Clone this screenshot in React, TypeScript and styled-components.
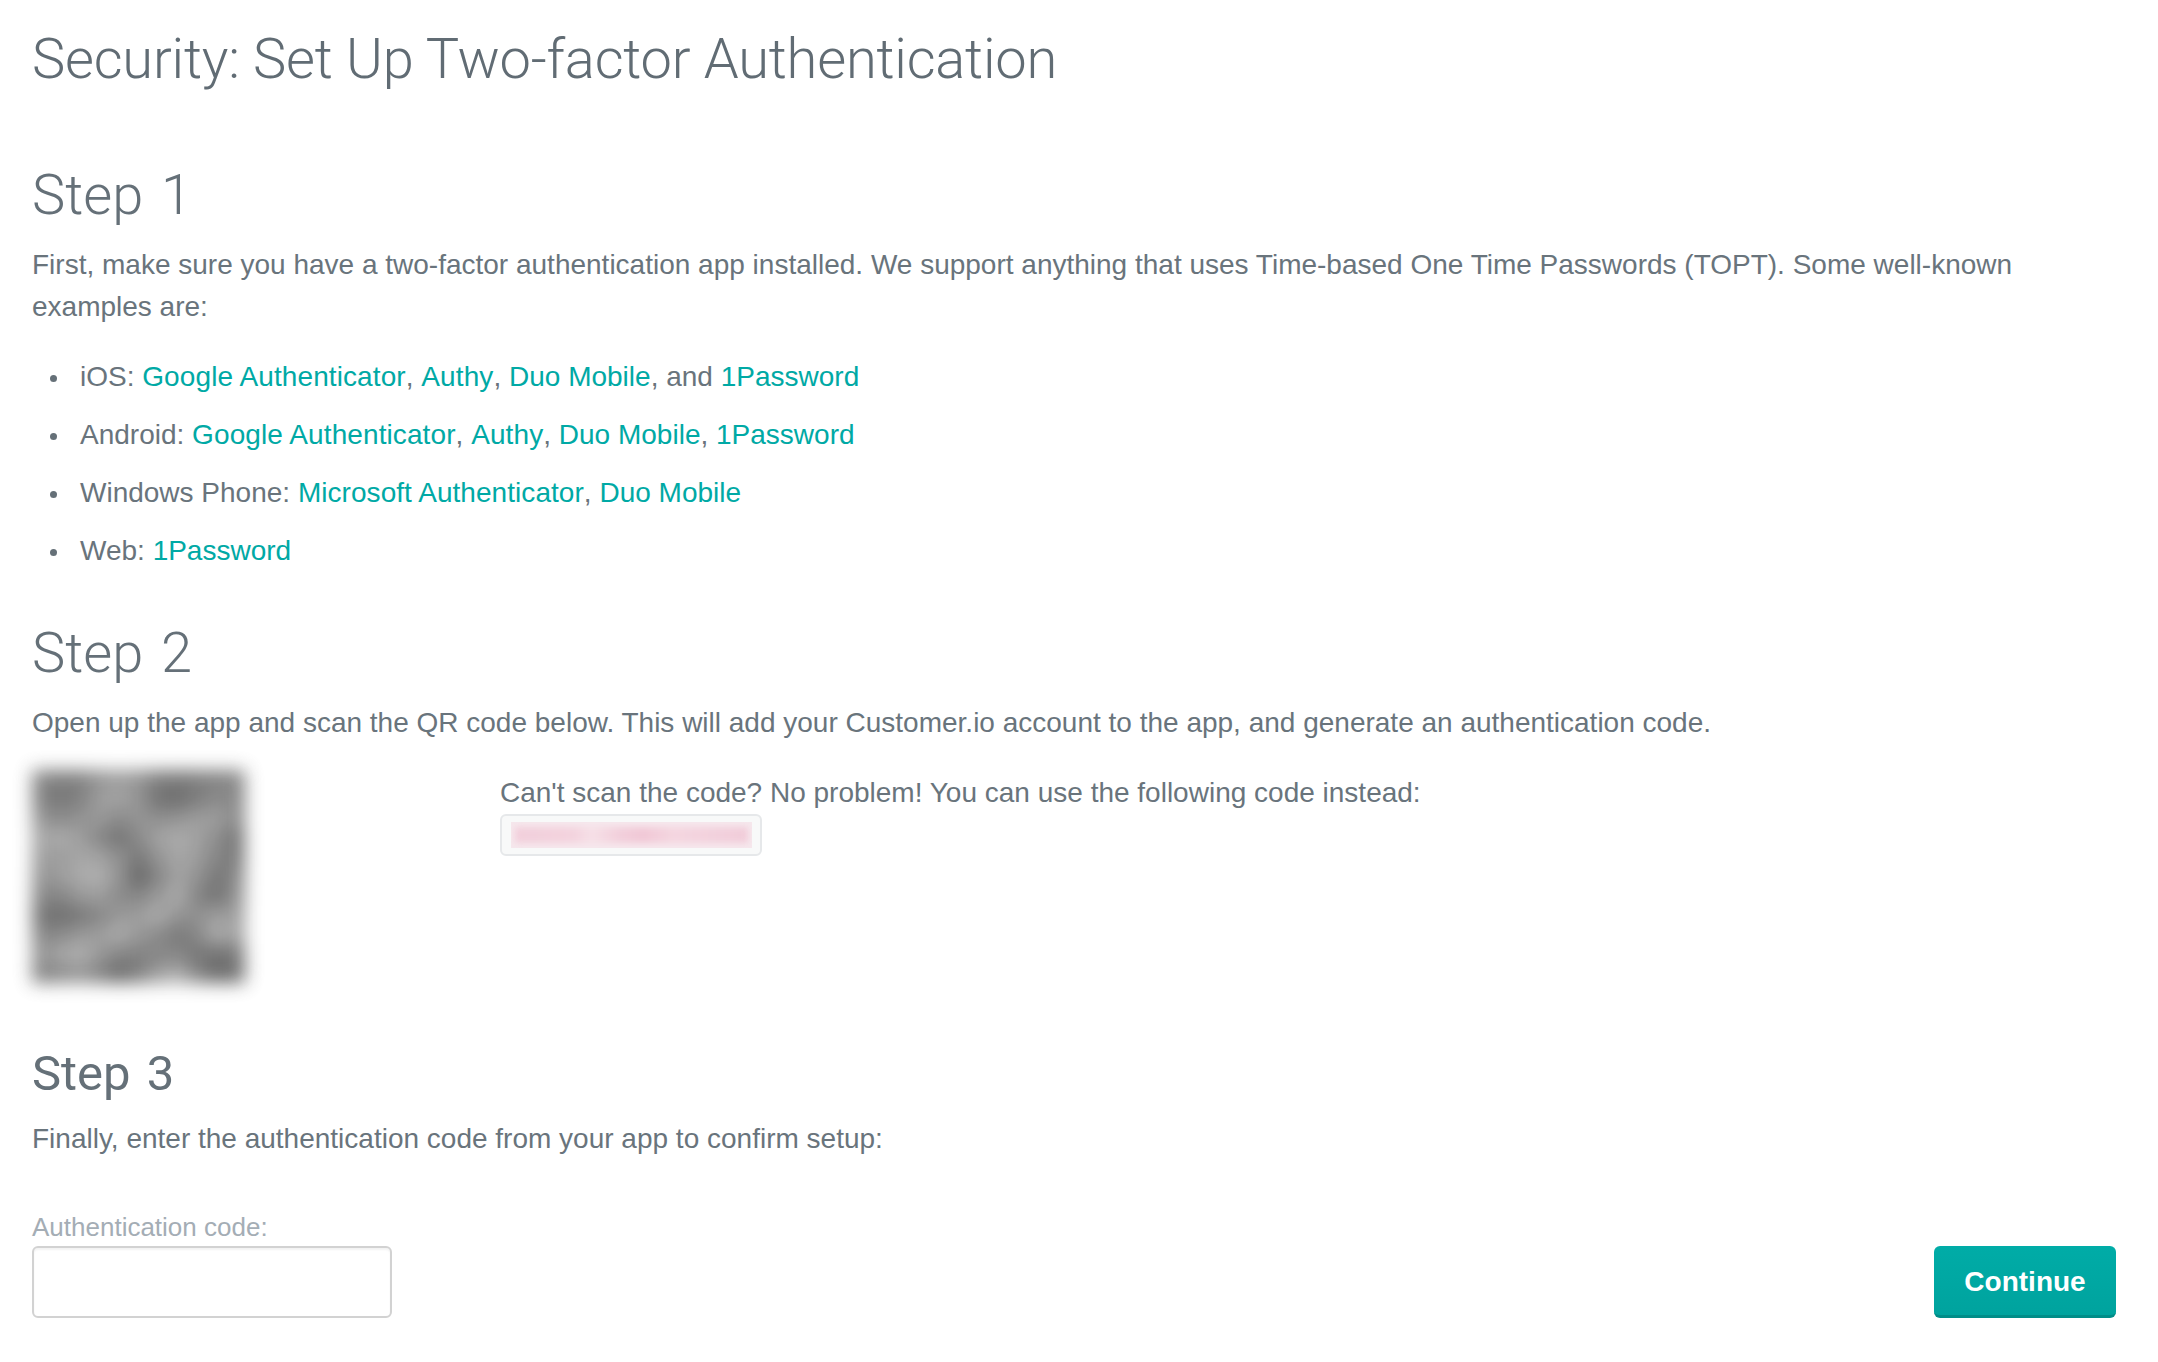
import styled, { createGlobalStyle } from 'styled-components';

const GlobalStyle = createGlobalStyle`
	html, body {
		margin: 0;
		padding: 0;
		background: #fff;
	}
	body {
		font-family: 'Liberation Sans', Arial, sans-serif;
		color: #69747c;
	}
`;

const Page = styled.div`
	width: 2158px;
	height: 1362px;
	box-sizing: border-box;
	padding: 24px 42px 0 32px;
	overflow: hidden;
`;
const Title = styled.h1`
	margin: 0 0 66px;
	font-family: Roboto, sans-serif;
	font-weight: 300;
	font-size: 56px;
	line-height: 70px;
	letter-spacing: -0.22px;
	color: #616c74;
`;
const StepTitle = styled.h2<{ $small?: boolean }>`
	margin: 0 0 14px;
	font-family: Roboto, sans-serif;
	font-weight: ${(props) => (props.$small ? 400 : 300)};
	font-size: ${(props) => (props.$small ? '49px' : '56px')};
	line-height: ${(props) => (props.$small ? '60px' : '70px')};
	word-spacing: 4px;
	color: #657078;
`;
const Text = styled.p`
	margin: 0;
	font-size: 28px;
	line-height: 42px;
`;
const Links = styled.ul`
	margin: 20px 0 38px;
	padding: 0 0 0 48px;
	list-style: none;
	font-size: 28px;
	line-height: 58px;
`;
const LinkItem = styled.li`
	&::before {
		content: '';
		display: inline-block;
		width: 7px;
		height: 7px;
		margin: 0 23px 4px -30px;
		border-radius: 50%;
		background: #657078;
	}
`;
const Anchor = styled.a<{ $spread?: number }>`
	color: #00a9a5;
	text-decoration: none;
	letter-spacing: ${(props) => props.$spread ?? 0}px;
`;
const ScanRow = styled.div`
	display: flex;
	margin: 26px 0 61px;
`;
const QrBox = styled.div`
	width: 213px;
	height: 213px;
	margin-right: 255px;
	flex: none;
`;
const QrArt = styled.svg`
	display: block;
	width: 213px;
	height: 213px;
	overflow: visible;
	opacity: 0.92;
	filter: blur(9px);
`;
const ManualCode = styled.div`
	padding-top: 2px;
`;
const CodeBox = styled.div`
	box-sizing: border-box;
	width: 262px;
	height: 42px;
	padding: 6px 8px 6px 9px;
	background: #f8f9f9;
	border: 2px solid #e6e8ea;
	border-radius: 6px;
`;
const CodeBlur = styled.div`
	height: 26px;
	overflow: hidden;
	background: #f6e8ed;

	&::before {
		content: '';
		display: block;
		height: 16px;
		margin: 5px 4px;
		background: linear-gradient(
			90deg,
			#f2cfdb 0%,
			#f3d3de 25%,
			#f6e0e7 33%,
			#f2cfdb 45%,
			#f1c8d6 55%,
			#f4d6e0 68%,
			#f2d0dc 88%,
			#f1ccd9 100%
		);
		filter: blur(3px);
	}
`;
const FormRow = styled.div`
	display: flex;
	justify-content: space-between;
	align-items: flex-end;
	margin-top: 52px;
`;
const Field = styled.label`
	display: block;
	font-size: 26px;
	line-height: 30px;
	color: #a4adb5;
`;
const CodeInput = styled.input`
	display: block;
	box-sizing: border-box;
	width: 360px;
	height: 72px;
	margin-top: 4px;
	background: #fff;
	border: 2px solid #d2d2d2;
	border-radius: 6px;
	box-shadow: inset 0 2px 2px rgba(0, 0, 0, 0.05);
`;
const ContinueButton = styled.button`
	width: 182px;
	height: 72px;
	padding: 3px 0 0;
	border: 0;
	border-bottom: 3px solid #008d88;
	border-radius: 6px;
	background: linear-gradient(#00aca7, #00a39e);
	color: #fff;
	font-family: 'Liberation Sans', Arial, sans-serif;
	font-size: 28px;
	font-weight: 700;
`;

// gray levels read off the blurred code in the screenshot
const qrShades = [
	[125, 115, 120, 140, 150, 140, 115, 110, 115, 120, 125],
	[120, 110, 120, 150, 155, 140, 105, 100, 115, 130, 125],
	[140, 130, 140, 145, 130, 140, 135, 140, 150, 150, 130],
	[160, 165, 150, 125, 105, 130, 155, 165, 155, 135, 105],
	[150, 150, 160, 155, 135, 110, 140, 160, 150, 125, 110],
	[140, 150, 165, 170, 140, 90, 125, 155, 140, 110, 125],
	[125, 125, 145, 150, 130, 125, 145, 165, 125, 105, 135],
	[105, 100, 110, 125, 145, 150, 165, 140, 135, 150, 150],
	[125, 130, 145, 150, 165, 145, 130, 110, 125, 165, 155],
	[140, 160, 170, 145, 125, 120, 125, 125, 110, 105, 110],
	[120, 130, 140, 120, 95, 115, 150, 165, 125, 95, 100],
];

export default function App() {
	return (
		<Page>
			<GlobalStyle />
			<Title>Security: Set Up Two-factor Authentication</Title>

			<StepTitle>Step 1</StepTitle>
			<Text>
				First, make sure you have a two-factor authentication app installed. We support anything
				that uses Time-based One Time Passwords (TOPT). Some well-known examples are:
			</Text>
			<Links>
				<LinkItem>
					iOS: <Anchor $spread={0.1}>Google Authenticator</Anchor>, <Anchor $spread={0.1}>Authy</Anchor>, <Anchor>Duo Mobile</Anchor>, and <Anchor>1Password</Anchor>
				</LinkItem>
				<LinkItem>
					Android: <Anchor $spread={0.1}>Google Authenticator</Anchor>, <Anchor $spread={0.1}>Authy</Anchor>, <Anchor>Duo Mobile</Anchor>, <Anchor>1Password</Anchor>
				</LinkItem>
				<LinkItem>
					Windows Phone: <Anchor $spread={0.05}>Microsoft Authenticator</Anchor>, <Anchor>Duo Mobile</Anchor>
				</LinkItem>
				<LinkItem>
					Web: <Anchor>1Password</Anchor>
				</LinkItem>
			</Links>

			<StepTitle>Step 2</StepTitle>
			<Text>
				Open up the app and scan the QR code below. This will add your Customer.io account to the
				app, and generate an authentication code.
			</Text>
			<ScanRow>
				<QrBox>
					<QrArt viewBox="0 0 11 11" shapeRendering="crispEdges">
						{qrShades.map((row, y) =>
							row.map((shade, x) => (
								<rect key={`${x}-${y}`} x={x} y={y} width="1" height="1" fill={`rgb(${shade},${shade},${shade})`} />
							)),
						)}
					</QrArt>
				</QrBox>
				<ManualCode>
					<Text>Can't scan the code? No problem! You can use the following code instead:</Text>
					<CodeBox>
						<CodeBlur />
					</CodeBox>
				</ManualCode>
			</ScanRow>

			<StepTitle $small>Step 3</StepTitle>
			<Text>Finally, enter the authentication code from your app to confirm setup:</Text>
			<FormRow>
				<Field>
					Authentication code:
					<CodeInput type="text" />
				</Field>
				<ContinueButton>Continue</ContinueButton>
			</FormRow>
		</Page>
	);
}
